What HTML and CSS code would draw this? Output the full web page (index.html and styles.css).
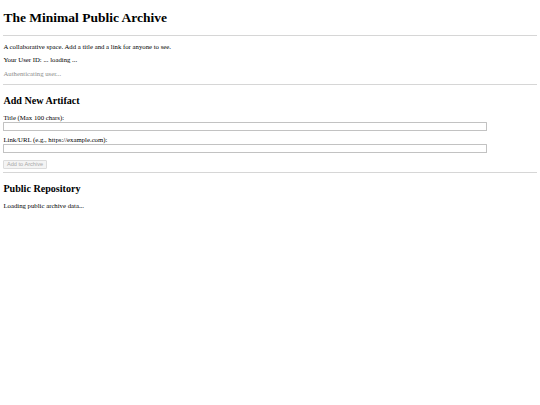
FILE: index.html
```html
<!DOCTYPE html>
<html lang="en">
<head>
<meta charset="utf-8">
<title>The Minimal Public Archive</title>
<link rel="stylesheet" href="styles.css">
</head>
<body class="page">
  <h1 class="title">The Minimal Public Archive</h1>
  <hr class="rule">
  <p class="text">A collaborative space. Add a title and a link for anyone to see.</p>
  <p class="text">Your User ID: ... loading ...</p>
  <p class="text muted">Authenticating user...</p>
  <hr class="rule">
  <section class="section">
    <h2 class="subtitle">Add New Artifact</h2>
    <form class="form">
      <label class="label" for="title">Title (Max 100 chars):</label>
      <input class="field" id="title" type="text">
      <label class="label" for="url">Link/URL (e.g., https://example.com):</label>
      <input class="field last" id="url" type="text">
      <button class="btn" type="button" disabled>Add to Archive</button>
    </form>
  </section>
  <hr class="rule">
  <section class="section">
    <h2 class="subtitle">Public Repository</h2>
    <p class="text">Loading public archive data...</p>
  </section>
</body>
</html>
```
FILE: styles.css
```css
html, body {
  background: #ffffff;
}
.page {
  margin: 3.4px;
  font-family: "Liberation Serif", "Times New Roman", serif;
  font-size: 6.75px;
  color: #000;
}
.title {
  font-size: 13.5px;
  font-weight: bold;
  margin: 6.5px 0 9px 0;
}
.rule {
  border: 0;
  height: 0;
  border-top: 1px solid #d6d6d6;
  margin: 3.4px 0;
}
.text {
  margin: 6.75px 0;
  font-size: 6.75px;
}
.muted {
  color: #8c8c8c;
}
.section {
  display: block;
}
.subtitle {
  font-size: 10.1px;
  font-weight: bold;
  margin: 9.9px 0 8.4px 0;
}
.form {
  display: flex;
  flex-direction: column;
  align-items: flex-start;
}
.label {
  display: block;
  font-size: 6.75px;
  line-height: 7.8px;
}
.field {
  box-sizing: border-box;
  width: calc(90% + 3.4px);
  height: 8.9px;
  margin: 0 0 5.4px 0;
  padding: 0;
  border: 1px solid #c2c2c2;
  border-radius: 0.5px;
  background: #fff;
  font-size: 5.6px;
}
.field.last {
  margin-bottom: 7.2px;
}
.btn {
  font-family: "Liberation Sans", Arial, sans-serif;
  font-size: 5.6px;
  height: 8.4px;
  padding: 0 2.6px;
  border: 1px solid #dcdcdc;
  border-radius: 1px;
  background: #f4f4f4;
  color: #a8a8a8;
  line-height: 6px;
}
```
